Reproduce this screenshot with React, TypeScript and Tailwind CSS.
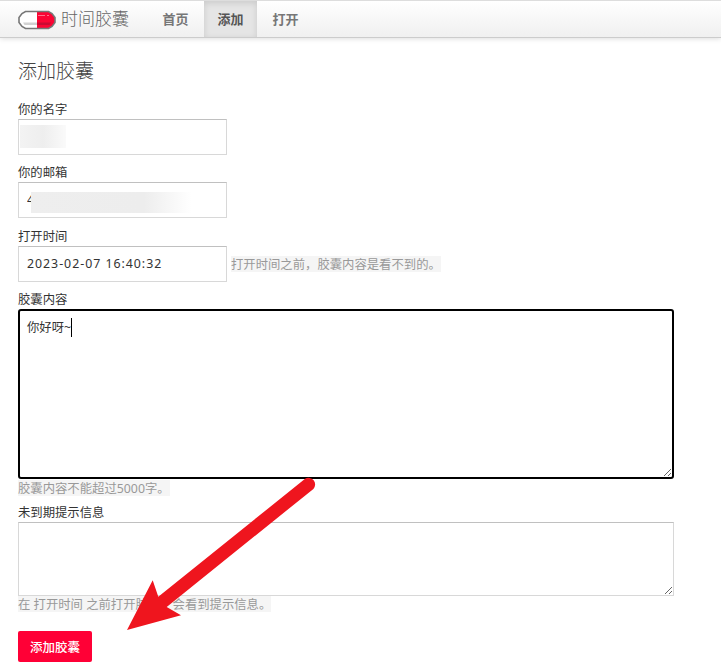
import type { ReactNode } from 'react';
import clsx from 'clsx';

const navItems = [
  { label: '首页', active: false },
  { label: '添加', active: true },
  { label: '打开', active: false },
];

const CapsuleLogo = () => (
  <svg className="mt-[2px] h-[20px] w-[38px] shrink-0" viewBox="0 0 38 20">
    <path d="M8 1.5H19V18.5H8L4 16.5L1 12.5V7.5L4 3.5Z" fill="#fff" />
    <path d="M19 1.5H30L34 3.5L37 7.5V12.5L34 16.5L30 18.5H19Z" fill="#fb0534" />
    <path d="M5 12.5H19V15H6.5Z" fill="#d2d2d2" />
    <path d="M19 12.5H33L31.5 15H19Z" fill="#c90a32" />
    <path d="M20 5.5h7M29 5.5h2" stroke="#ff6f8a" />
    <path
      d="M7.5 1.5H30.5L34 3.5L37 7.5V12.5L34 16.5L30.5 18.5H7.5L4 16.5L1 12.5V7.5L4 3.5Z"
      fill="none"
      stroke="#777"
      strokeWidth="1.6"
    />
  </svg>
);

const Header = () => (
  <header className="flex h-[38px] border-t border-b border-t-[#ddd] border-b-[#ccc] bg-gradient-to-b from-white to-[#f0f0f0] pl-[18px] shadow-[0_1px_5px_rgba(0,0,0,0.13)]">
    <div className="flex w-[129px] items-center gap-[5px]">
      <CapsuleLogo />
      <span className="text-[17px] leading-[36px] font-light text-[#666]">时间胶囊</span>
    </div>
    <nav className="flex">
      {navItems.map((item) => (
        <a
          key={item.label}
          className={clsx(
            'block text-center text-[13px] leading-[36px]',
            item.active
              ? 'w-[53px] bg-[#e5e5e5] font-bold text-[#555] shadow-[inset_0_2px_6px_rgba(0,0,0,0.12)]'
              : 'w-[57px] font-bold text-[#777]',
          )}
        >
          {item.label}
        </a>
      ))}
    </nav>
  </header>
);

const Label = ({ children }: { children: ReactNode }) => (
  <label className="block h-[20px] text-[12.35px] leading-[22px] text-[#333]">{children}</label>
);

const Hint = ({ children }: { children: ReactNode }) => (
  <span className="block h-[16px] w-fit bg-[#f5f5f5] text-[12.35px] leading-[17px] whitespace-nowrap text-[#999]">
    {children}
  </span>
);

const inputClass =
  'block h-[36px] w-[209px] border border-[#d8d8d8] border-t-[#c0c0c0] bg-white px-2 pb-[2px] text-[12.35px] tracking-[0.98px] text-[#333] outline-none';

const Arrow = () => (
  <svg className="pointer-events-none absolute top-[470px] left-[110px] h-[170px] w-[220px]" viewBox="110 470 220 170">
    <path
      d="M127 630L152.7 580.3L158.3 596.7L305.1 478.8A6.6 6.6 0 0 1 313.4 488.9L166.7 607L181 615.3Z"
      fill="#ef151e"
    />
  </svg>
);

const App = () => (
  <div className="relative h-[663px] w-[721px] overflow-hidden bg-white font-['Noto_Sans','Noto_Sans_CJK_SC',sans-serif]">
    <Header />
    <main className="px-[18px] pt-[19px]">
      <h1 className="h-[42px] text-[19px] leading-[29px] font-light text-[#444]">添加胶囊</h1>

      <div className="relative h-[63px]">
        <Label>你的名字</Label>
        <input className={inputClass} />
        <div className="absolute top-[26px] left-[2px] h-[23px] w-[46px] bg-gradient-to-r from-[#f3f3f3] via-[#eeeeee] to-[#fafafa]" />
      </div>

      <div className="relative h-[64px]">
        <Label>你的邮箱</Label>
        <input className={inputClass} defaultValue="4" />
        <div className="absolute top-[30px] left-[13px] h-[21px] w-[161px] bg-gradient-to-r from-[#eeeeee] via-[#ededed] via-70% to-white" />
      </div>

      <div className="h-[63px]">
        <Label>打开时间</Label>
        <div className="flex items-center gap-1">
          <input className={inputClass} defaultValue="2023-02-07 16:40:32" />
          <Hint>打开时间之前，胶囊内容是看不到的。</Hint>
        </div>
      </div>

      <div className="relative mb-[6px]">
        <Label>胶囊内容</Label>
        <textarea
          className="block h-[170px] w-[656px] resize rounded-[3px] border-2 border-black bg-white px-[7px] pt-[7px] text-[12.35px] leading-[20px] text-[#333] outline-none"
          defaultValue="你好呀~"
        />
        <div className="absolute top-[29px] left-[53px] h-[19px] w-px bg-black" />
        <div className="pt-px">
          <Hint>胶囊内容不能超过5000字。</Hint>
        </div>
      </div>

      <div className="mb-[19px]">
        <Label>未到期提示信息</Label>
        <textarea className="block h-[74px] w-[656px] resize border border-[#d8d8d8] border-t-[#c0c0c0] bg-white outline-none" />
        <Hint>在 打开时间 之前打开胶囊，会看到提示信息。</Hint>
      </div>

      <button className="block h-[31px] w-[74px] rounded-[2px] bg-[#ff0036] pt-[2px] text-[12.5px] leading-[29px] font-medium text-white">
        添加胶囊
      </button>
    </main>
    <Arrow />
  </div>
);

export default App;
